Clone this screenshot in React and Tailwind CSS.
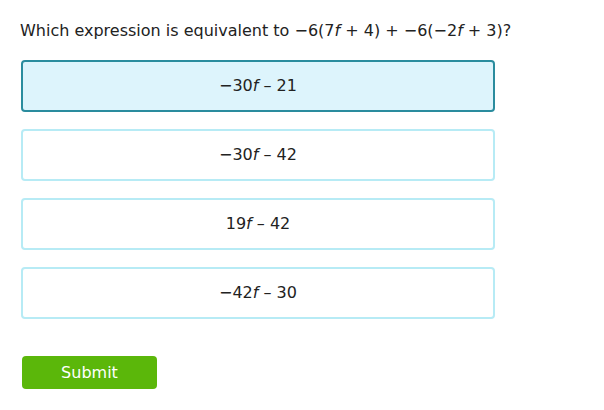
export default function App() {
  const choices = [
    { id: 1, pre: "−30", post: " – 21", selected: true },
    { id: 2, pre: "−30", post: " – 42" },
    { id: 3, pre: "19", post: " – 42" },
    { id: 4, pre: "−42", post: " – 30" },
  ];

  return (
    <div
      className="w-[604px] h-[410px] bg-white text-[#222] pl-[21px] pt-[19px]"
      style={{ fontFamily: '"DejaVu Sans", Verdana, sans-serif' }}
    >
      <div className="text-[16px] leading-[24px] -ml-px">
        Which expression is equivalent to −6(7<i>f</i> + 4) + −6(−2<i>f</i> + 3)?
      </div>

      <div className="mt-[17px] flex flex-col gap-[17px] w-[474px]">
        {choices.map((c) => (
          <div
            key={c.id}
            className={
              c.selected
                ? "h-[52px] rounded-[4px] border-2 border-[#2a8c9e] bg-[#ddf4fc] flex items-center justify-center text-[16px]"
                : "h-[52px] rounded-[4px] border-2 border-[#b7ebf5] bg-white flex items-center justify-center text-[16px]"
            }
          >
            <span>
              {c.pre}
              <i>f</i>
              {c.post}
            </span>
          </div>
        ))}
      </div>

      <button className="mt-[37px] ml-px w-[135px] h-[33px] rounded-[4px] bg-[#5bb70a] text-white text-[16px] flex items-center justify-center">
        Submit
      </button>
    </div>
  );
}
